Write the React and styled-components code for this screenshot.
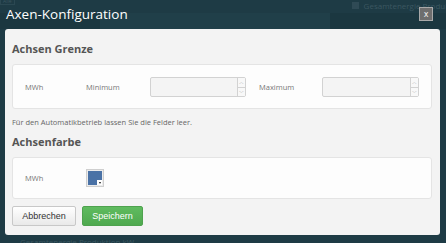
import React from "react";
import styled, { createGlobalStyle } from "styled-components";

const GlobalStyle = createGlobalStyle`
  html, body {
    margin: 0;
    padding: 0;
    background: #1e3b45;
    overflow: hidden;
  }
  * { box-sizing: border-box; }
`;

const Screen = styled.div`
  position: relative;
  width: 446px;
  height: 243px;
  overflow: hidden;
  background: #1e3b45;
  font-family: "Open Sans", "DejaVu Sans", sans-serif;
`;

/* page behind the modal, dimmed */
const Page = styled.div`
  display: flex;
  flex-direction: column;
  height: 100%;
  color: #3c5761;
`;

const TopLegend = styled.div`
  display: flex;
  align-items: flex-start;
  justify-content: space-between;
  height: 13px;
  font-size: 8px;
  line-height: 11px;
`;

const AllTag = styled.span`
  font-size: 5px;
  padding: 0 2px;
  border: 1px solid #2b4852;
  line-height: 5px;
  margin-top: -2px;
`;

const LegendItem = styled.span`
  display: flex;
  align-items: center;
  gap: 5px;
  margin-right: -18px;
  white-space: nowrap;
`;

const LegendBox = styled.span`
  width: 7px;
  height: 7px;
  background: #2f4a55;
`;

const Band = styled.div`
  height: 16px;
  display: grid;
  grid-template-columns: 100px 230px 1fr;
  & > span:nth-child(1) { background: #1b3740; }
  & > span:nth-child(2) { background: #203f49; }
  & > span:nth-child(3) { background: #1b3740; }
`;

const PageFill = styled.div`
  flex: 1;
`;

const BottomLegend = styled.div`
  height: 5px;
  padding-left: 20px;
  font-size: 8px;
  line-height: 8px;
  overflow: hidden;
`;

const Dialog = styled.div`
  position: absolute;
  left: 5px;
  top: 0;
  width: 435px;
  display: flex;
  flex-direction: column;
`;

const Header = styled.div`
  height: 29px;
  display: flex;
  justify-content: space-between;
  align-items: flex-start;
  padding: 5px 7px 0 1px;
`;

const Title = styled.h1`
  margin: 0;
  font-size: 13.5px;
  line-height: 19px;
  font-weight: 400;
  color: #ffffff;
`;

const CloseButton = styled.button`
  margin-top: 2px;
  width: 14px;
  height: 14px;
  padding: 0;
  border: 1px solid #a9a9a9;
  background: #6e6e6e;
  color: #f2f2f2;
  font-family: "DejaVu Sans", sans-serif;
  font-size: 8px;
  line-height: 11px;
  text-align: center;
`;

const Panel = styled.div`
  height: 206px;
  background: #f3f3f3;
  border-radius: 3px;
  padding: 12px 8px 9px 7px;
  display: flex;
  flex-direction: column;
`;

const SectionTitle = styled.h2`
  margin: 0;
  font-size: 11px;
  line-height: 15px;
  font-weight: 700;
  color: #555555;
`;

const Card = styled.div`
  margin-top: 8px;
  background: #fdfdfd;
  border: 1px solid #e4e4e4;
  border-radius: 3px;
  padding: ${p => (p.$tall ? "12px 12px 11px" : "11px 12px")};
  display: grid;
  grid-template-columns: 61px 64px 96px 76px 97px;
  align-items: center;
`;

const Label = styled.span`
  font-size: 7.5px;
  color: #777777;
  padding-left: ${p => p.$indent || 0}px;
`;

const NumberField = styled.div`
  display: flex;
  height: 20px;
  border: 1px solid #d2d2d2;
  border-radius: 2px;
  background: #f4f4f4;
`;

const FieldInput = styled.div`
  flex: 1;
`;

const Spinner = styled.div`
  width: 8px;
  display: flex;
  flex-direction: column;
  border-left: 1px solid #d2d2d2;
  background: #f8f8f8;
  & > span {
    flex: 1;
    display: flex;
    align-items: center;
    justify-content: center;
    font-size: 5px;
    color: #999;
  }
  & > span + span { border-top: 1px solid #d2d2d2; }
`;

const Hint = styled.p`
  margin: 8px 0 0;
  font-size: 7.5px;
  line-height: 10px;
  color: #666666;
`;

const Spacer = styled.div`
  height: 7px;
`;

const Swatch = styled.div`
  position: relative;
  width: 18px;
  height: 18px;
  padding: 1px;
  border: 1px solid #cfcfcf;
  background: #ececec;
`;

const SwatchColor = styled.div`
  width: 100%;
  height: 100%;
  background: #4a72a6;
`;

const SwatchArrow = styled.span`
  position: absolute;
  right: 1px;
  bottom: 1px;
  width: 5px;
  height: 5px;
  background: #ffffff;
  display: flex;
  align-items: center;
  justify-content: center;
  &::after {
    content: "";
    border-left: 1.5px solid transparent;
    border-right: 1.5px solid transparent;
    border-top: 2px solid #111;
  }
`;

const Actions = styled.div`
  margin-top: 7px;
  display: flex;
  gap: 6px;
`;

const Button = styled.button`
  height: 20px;
  width: ${p => p.$w}px;
  padding: 0;
  border-radius: 2px;
  font-family: "Liberation Sans", Arial, sans-serif;
  font-size: 9px;
  border: 1px solid ${p => (p.$primary ? "#4ea24e" : "#c8c8c8")};
  color: ${p => (p.$primary ? "#ffffff" : "#333333")};
  background: ${p =>
    p.$primary
      ? "linear-gradient(#5fbb5f, #4fa94f)"
      : "linear-gradient(#ffffff, #e9e9e9)"};
`;

const Spin = () => (
  <Spinner>
    <span>︿</span>
    <span>﹀</span>
  </Spinner>
);

export default function App() {
  return (
    <Screen>
      <GlobalStyle />
      <Page>
        <TopLegend>
          <AllTag>Alle</AllTag>
          <LegendItem>
            <LegendBox />
            Gesamtenergie Produktion
          </LegendItem>
        </TopLegend>
        <Band>
          <span />
          <span />
          <span />
        </Band>
        <PageFill />
        <BottomLegend>Gesamtenergie Produktion kW</BottomLegend>
      </Page>

      <Dialog>
        <Header>
          <Title>Axen-Konfiguration</Title>
          <CloseButton>x</CloseButton>
        </Header>
        <Panel>
          <SectionTitle>Achsen Grenze</SectionTitle>
          <Card $tall>
            <Label>MWh</Label>
            <Label>Minimum</Label>
            <NumberField>
              <FieldInput />
              <Spin />
            </NumberField>
            <Label $indent={13}>Maximum</Label>
            <NumberField>
              <FieldInput />
              <Spin />
            </NumberField>
          </Card>
          <Hint>Für den Automatikbetrieb lassen Sie die Felder leer.</Hint>
          <Spacer />
          <SectionTitle>Achsenfarbe</SectionTitle>
          <Card>
            <Label>MWh</Label>
            <Swatch>
              <SwatchColor />
              <SwatchArrow />
            </Swatch>
          </Card>
          <Actions>
            <Button $w={64}>Abbrechen</Button>
            <Button $w={61} $primary>
              Speichern
            </Button>
          </Actions>
        </Panel>
      </Dialog>
    </Screen>
  );
}
